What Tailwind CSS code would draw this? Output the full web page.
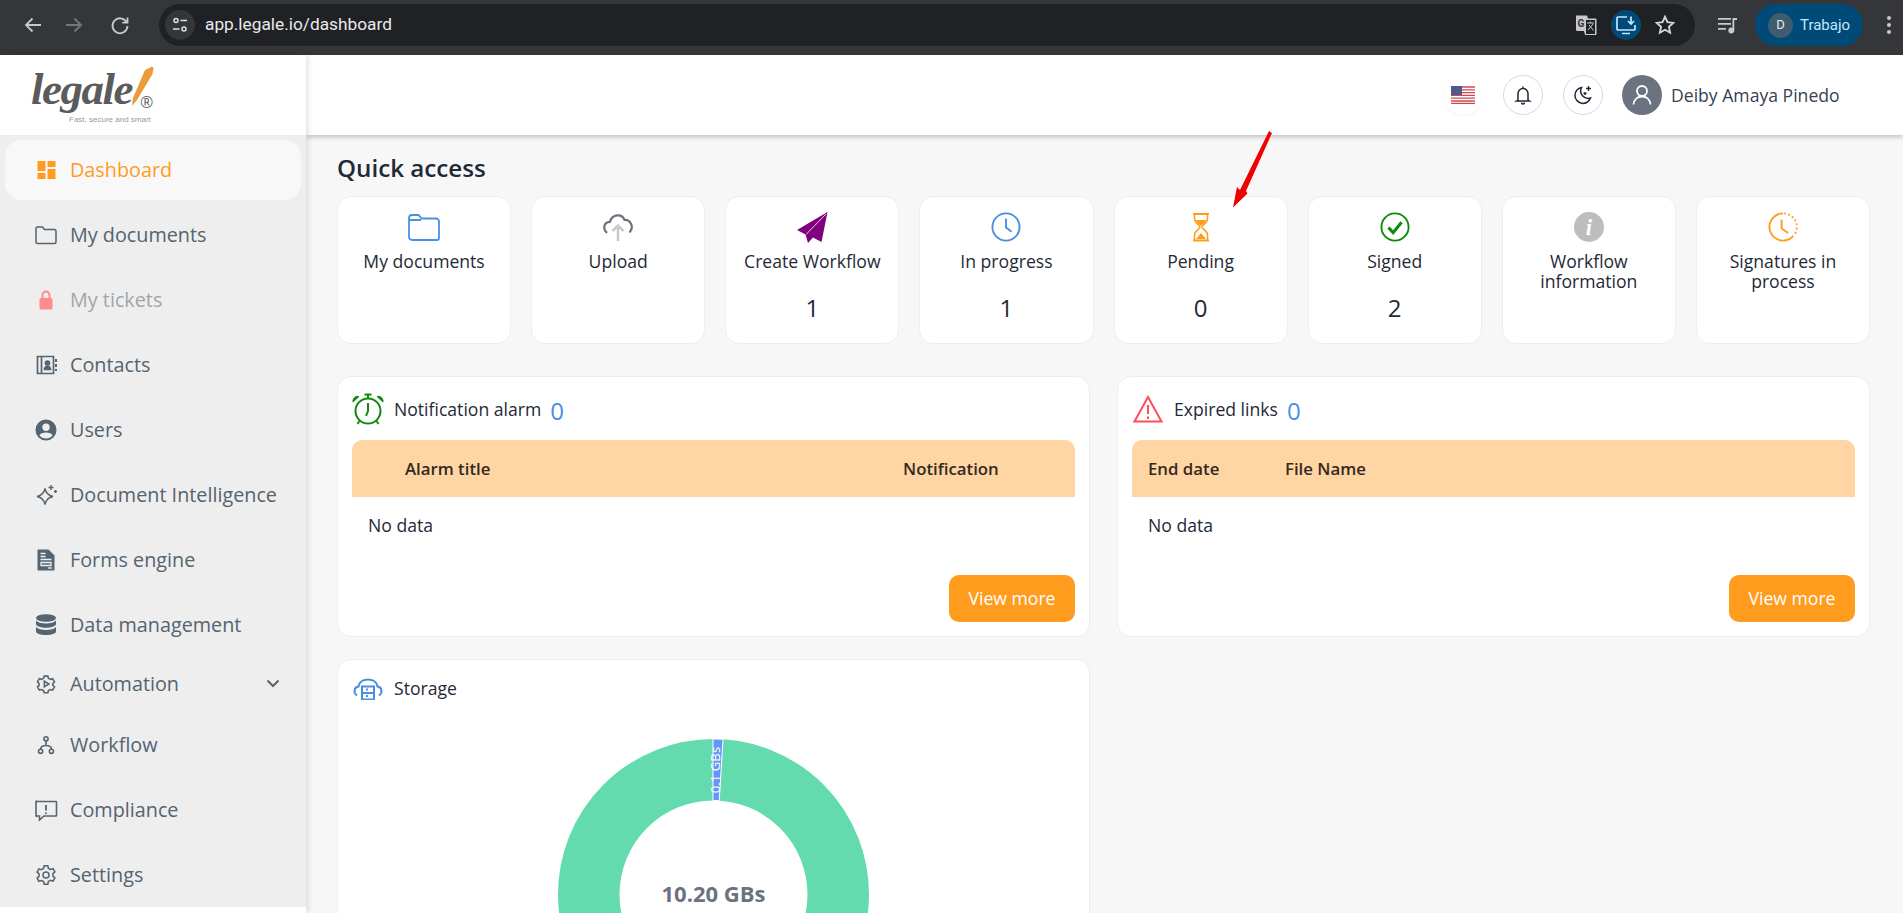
<!DOCTYPE html>
<html lang="en">
<head>
  <meta charset="UTF-8" />
  <title>Legale dashboard</title>
  <script src="https://cdn.jsdelivr.net/npm/@tailwindcss/browser@4"></script>
</head>
<body class="h-[913px] overflow-hidden bg-white font-['Open_Sans',sans-serif] text-[17.6px] text-[#1f2937]">
  <!-- browser chrome -->
  <div class="h-[55px] pb-[5px] bg-[#35363a] flex items-center relative font-['Roboto',sans-serif]">
    <div class="w-[159px] shrink-0 flex items-center pl-[21px] gap-[17px] text-[#c7c9cc]">
      <svg class="w-6 h-6" viewBox="0 0 24 24" fill="none" stroke="currentColor" stroke-width="1.8"><path d="M20 12H5M11.5 5.5 5 12l6.500 6.500"/></svg>
      <svg class="w-6 h-6 text-[#75777b]" viewBox="0 0 24 24" fill="none" stroke="currentColor" stroke-width="1.800"><path d="M4 12h15M12.500 5.500 19 12l-6.500 6.500"/></svg>
      <svg class="w-6 h-6 ml-[5px]" viewBox="0 0 24 24" fill="none" stroke="currentColor" stroke-width="1.800"><path d="M18.500 9A7.500 7.500 0 1 0 19.500 13"/><path d="M19.500 4.500v5.200h-5.200" /></svg>
    </div>
    <div class="w-[1536px] h-[42px] rounded-full bg-[#202124] flex items-center pl-[6px] pr-[19px]">
      <div class="w-[30px] h-[30px] rounded-full bg-[#35363a] flex items-center justify-center text-[#dfe1e5]">
        <svg class="w-[18px] h-[18px]" viewBox="0 0 18 18" fill="none" stroke="currentColor" stroke-width="1.500"><circle cx="5" cy="4.500" r="2"/><path d="M9.500 4.500H16M2 13h6.500"/><circle cx="13" cy="13" r="2"/></svg>
      </div>
      <span class="ml-[10px] text-[17.3px] text-[#e8eaed]">app.legale.io/dashboard</span>
      <div class="ml-auto flex items-center">
        <svg class="w-[22px] h-[22px]" viewBox="0 0 22 22"><path d="M1 1.500h11l1 3H20.500a1 1 0 0 1 1 1V20a1 1 0 0 1-1 1H10l-1-4H2a1 1 0 0 1-1-1z" fill="#c7c9cc"/><path d="M11 6h9v14h-9z" fill="#202124"/><path d="M12 9h7M15.500 7.500V9M13 16l5-6M14 11l4.500 5.500" stroke="#c7c9cc" fill="none"/><text x="2.500" y="13" font-size="10" font-weight="700" fill="#35363a">G</text></svg>
        <div class="ml-[14px] w-[30px] h-[30px] rounded-full bg-[#004a77] flex items-center justify-center text-[#c2e7ff]">
          <svg class="w-[22px] h-[22px]" viewBox="0 0 22 22" fill="none" stroke="currentColor" stroke-width="1.700"><path d="M12 3H3a1 1 0 0 0-1 1v11a1 1 0 0 0 1 1h16a1 1 0 0 0 1-1v-4M7 19.500h8M16 2.500v7M13 7l3 3 3-3"/></svg>
        </div>
        <svg class="ml-[13px] w-[22px] h-[22px] text-[#d5d7da]" viewBox="0 0 24 24" fill="none" stroke="currentColor" stroke-width="2"><path d="m12 3 2.700 6 6.300.700-4.700 4.300 1.300 6.500L12 17.200 6.400 20.500 7.700 14 3 9.700 9.300 9z"/></svg>
      </div>
    </div>
    <svg class="ml-[22px] w-[22px] h-[22px] text-[#c7c9cc]" viewBox="0 0 22 22" fill="currentColor"><path d="M1 4h13v1.800H1zM1 9h13v1.800H1zM1 14h8v1.800H1z"/><path d="M15.500 4H20v2h-2.700v10.500a3 3 0 1 1-1.800-2.700z"/></svg>
    <div class="ml-[16px] w-[108px] h-[42px] rounded-full bg-[#004a77] flex items-center pl-[13px]">
      <div class="w-[25px] h-[25px] rounded-full bg-[#3f5d6e] flex items-center justify-center text-[13px] text-[#e8eaed]">D</div>
      <span class="ml-[7px] text-[15px] text-[#c2e7ff]">Trabajo</span>
    </div>
    <div class="ml-[24px] flex flex-col gap-[3px]">
      <span class="w-[4px] h-[4px] rounded-full bg-[#c7c9cc]"></span>
      <span class="w-[4px] h-[4px] rounded-full bg-[#c7c9cc]"></span>
      <span class="w-[4px] h-[4px] rounded-full bg-[#c7c9cc]"></span>
    </div>
  </div>

  <div class="flex h-[858px]">
    <!-- sidebar -->
    <aside class="w-[306px] shrink-0 bg-white z-10 shadow-[2px_0_6px_rgba(0,0,0,0.12)]">
      <div class="h-[80px] relative">
        <span class="absolute left-[31px] top-[6px] font-['Liberation_Serif',serif] italic font-bold text-[45px] leading-[56px] text-[#5b5b5b] tracking-[-1.5px]">legale</span>
        <svg class="absolute left-[126px] top-[9px] w-[30px] h-[46px]" viewBox="0 0 30 46"><path d="M19 6 26 2.500l1.500 1.500-1 6L11 36l-5 6 1-8z" fill="#ec9a3c"/></svg>
        <span class="absolute left-[140px] top-[38px] text-[16px] leading-[18px] text-[#666]">®</span>
        <span class="absolute left-[69px] top-[59px] font-['Liberation_Sans',sans-serif] text-[8px] leading-[12px] text-[#999] whitespace-nowrap">Fast, secure and smart</span>
      </div>
      <nav class="bg-[#eeeeee] h-[772px] px-[5px] pt-[5px] text-[19.8px] text-[#546470]">
        <a class="h-[60px] flex items-center pl-[29px] gap-[12px] rounded-[16px] bg-[#f8f8f8] text-[#ff9c1e]">
          <svg class="w-6 h-6" viewBox="0 0 24 24" fill="currentColor"><path d="M3.500 13h8V3h-8zm0 8h8v-6h-8zm10 0h8V11h-8zm0-18v6h8V3z"/></svg>
          Dashboard
        </a>
        <a class="mt-[5px] h-[60px] flex items-center pl-[29px] gap-[12px]">
          <svg class="w-6 h-6" viewBox="0 0 24 24" fill="none" stroke="currentColor" stroke-width="1.500"><path d="M2 5.500a1.500 1.500 0 0 1 1.500-1.500h5l2 2.500h10a1.500 1.500 0 0 1 1.500 1.500v11a1.500 1.500 0 0 1-1.500 1.500h-17A1.500 1.500 0 0 1 2 19z"/></svg>
          My documents
        </a>
        <a class="mt-[5px] h-[60px] flex items-center pl-[29px] gap-[12px] text-[#a0a6aa]">
          <svg class="w-6 h-6" viewBox="0 0 24 24"><path d="M8.500 11V7a3.500 3.500 0 0 1 7 0v4" fill="none" stroke="#ff8c8c" stroke-width="2"/><rect x="5.500" y="10" width="13" height="11.500" rx="1.500" fill="#ff8c8c"/></svg>
          My tickets
        </a>
        <a class="mt-[5px] h-[60px] flex items-center pl-[29px] gap-[12px]">
          <svg class="w-6 h-6" viewBox="0 0 24 24" fill="none" stroke="currentColor" stroke-width="1.700"><path d="M3.500 3.500h16v17h-16zM7.500 3.500v17"/><circle cx="13.500" cy="10" r="2" fill="currentColor"/><path d="M10.500 16.500c0-4 6-4 6 0z" fill="currentColor"/><path d="M22 6v3M22 11v3M22 16v2" stroke-width="2"/></svg>
          Contacts
        </a>
        <a class="mt-[5px] h-[60px] flex items-center pl-[29px] gap-[12px]">
          <svg class="w-6 h-6" viewBox="0 0 24 24" fill="currentColor"><path d="M12 1.500a10.500 10.500 0 1 0 0 21 10.500 10.500 0 0 0 0-21zm0 4a3.700 3.700 0 1 1 0 7.400 3.700 3.700 0 0 1 0-7.400zm0 15a8.500 8.500 0 0 1-6.600-3.200c.8-1.800 3.600-2.800 6.600-2.800s5.800 1 6.600 2.800A8.500 8.500 0 0 1 12 20.500z"/></svg>
          Users
        </a>
        <a class="mt-[5px] h-[60px] flex items-center pl-[29px] gap-[12px]">
          <svg class="w-6 h-6" viewBox="0 0 24 24" fill="none" stroke="currentColor" stroke-width="1.400"><path d="M11 5.500C12 10.500 14 12.500 19 13.500 14 14.500 12 16.500 11 21.500 10 16.500 8 14.500 3 13.500 8 12.500 10 10.500 11 5.500Z"/><path d="M17 2v5M14.500 4.500h5M21.500 7v3M20 8.500h3"/></svg>
          Document Intelligence
        </a>
        <a class="mt-[5px] h-[60px] flex items-center pl-[29px] gap-[12px]">
          <svg class="w-6 h-6" viewBox="0 0 24 24"><path d="M3.500 1.500h11l6 6v15h-17z" fill="currentColor"/><path d="M6.500 5.500h5M6.500 8.500h5M6.500 11.500h11M7 14.500h10v3H7z" stroke="#eeeeee" stroke-width="1.300" fill="none"/><path d="M14 20h4" stroke="#eeeeee" stroke-width="1.300"/></svg>
          Forms engine
        </a>
        <a class="mt-[5px] h-[60px] flex items-center pl-[29px] gap-[12px]">
          <svg class="w-6 h-6" viewBox="0 0 24 24" fill="currentColor"><ellipse cx="12" cy="5" rx="10" ry="3.800"/><path d="M2 7.500v3.500c0 2 4.500 3.800 10 3.800s10-1.800 10-3.800V7.500c-1.500 2-5.500 3-10 3s-8.500-1-10-3z"/><path d="M2 14v4.500c0 2 4.500 3.500 10 3.500s10-1.500 10-3.500V14c-1.500 2-5.500 3-10 3s-8.500-1-10-3z"/></svg>
          Data management
        </a>
        <a class="-mt-[1px] h-[60px] flex items-center pl-[29px] gap-[12px]">
          <svg class="w-[20px] h-[20px] mx-[2px]" viewBox="0 0 24 24" fill="none" stroke="currentColor" stroke-width="1.900"><path d="M9.800 2.500h4.400l.7 2.600 2.500 1.300 2.600-.8 2.200 3.900-1.900 1.900v2.200l1.900 1.900-2.200 3.900-2.600-.8-2.500 1.300-.7 2.600H9.800l-.7-2.600-2.500-1.300-2.600.8-2.200-3.900 1.900-1.900v-2.200L1.800 9.500 4 5.600l2.600.8 2.500-1.300z"/><path d="M10 8.500v7l5.500-3.500z"/></svg>
          Automation
          <svg class="w-5 h-5 ml-auto mr-[18px]" viewBox="0 0 20 20" fill="none" stroke="currentColor" stroke-width="2"><path d="m4.500 6.500 5.500 5.500 5.500-5.500"/></svg>
        </a>
        <a class="mt-[1px] h-[60px] flex items-center pl-[29px] gap-[12px]">
          <svg class="w-[20px] h-[20px] mx-[2px]" viewBox="0 0 24 24" fill="none" stroke="currentColor" stroke-width="1.900"><circle cx="12" cy="4.500" r="2.500"/><circle cx="5.500" cy="19.500" r="2.500"/><circle cx="18.500" cy="19.500" r="2.500"/><path d="M12 7v5.500M5.500 17c0-3 2.500-4.500 6.500-4.500s6.500 1.500 6.500 4.500"/></svg>
          Workflow
        </a>
        <a class="mt-[5px] h-[60px] flex items-center pl-[29px] gap-[12px]">
          <svg class="w-6 h-6" viewBox="0 0 24 24" fill="none" stroke="currentColor" stroke-width="1.600"><path d="M3 3.500h19a.5.5 0 0 1 .5.500v13.500a.5.5 0 0 1-.5.500H10l-4.500 4V18H3a.5.5 0 0 1-1-.5V4a.5.5 0 0 1 1-.5z"/><path d="M12 7v5.500M12 14.500v1.500" stroke-width="1.800"/></svg>
          Compliance
        </a>
        <a class="mt-[5px] h-[60px] flex items-center pl-[29px] gap-[12px]">
          <svg class="w-[22px] h-[22px] mx-[1px]" viewBox="0 0 24 24" fill="none" stroke="currentColor" stroke-width="1.700"><path d="M10 2h4l.6 2.800 2.400 1.200 2.700-.9 2 3.500-2.100 1.900v2.800l2.100 1.900-2 3.500-2.700-.9-2.400 1.200L14 22h-4l-.6-2.800L7 18l-2.700.9-2-3.500 2.100-1.900v-2.800L2.300 8.800l2-3.500L7 6.200l2.400-1.400z"/><circle cx="12" cy="12" r="3.300"/></svg>
          Settings
        </a>
      </nav>
    </aside>

    <div class="flex-1 min-w-0 h-full overflow-hidden bg-[#f7f7f7]">
      <!-- top header -->
      <header class="h-[80px] bg-white shadow-[0_2px_5px_rgba(0,0,0,0.22)] flex items-center pl-[1138px]">
        <div class="w-[38px] h-[40px] rounded-full shadow-[0_1px_3px_rgba(0,0,0,0.06)] flex items-center justify-center">
          <svg class="w-[24px] h-[18px]" viewBox="0 0 24 18"><rect width="24" height="18" fill="#fff"/><path d="M0 1h24M0 3.800h24M0 6.600h24M0 9.400h24M0 12.200h24M0 15h24M0 17.500h24" stroke="#cf4a55" stroke-width="1.300"/><rect width="11" height="9" fill="#4c5a8c"/></svg>
        </div>
        <div class="ml-[21px] w-[40px] h-[40px] rounded-full border border-[#d5d8e0] flex items-center justify-center text-[#1f2937]">
          <svg class="w-[20px] h-[20px]" viewBox="0 0 20 20" fill="none" stroke="currentColor" stroke-width="1.500"><path d="M5 15V8.500a5 5 0 0 1 10 0V15l1.500 1h-13zM10 1.500v2M8.500 17.500a1.500 1.500 0 0 0 3 0"/></svg>
        </div>
        <div class="ml-[20px] w-[40px] h-[40px] rounded-full border border-[#d5d8e0] flex items-center justify-center text-[#1f2937]">
          <svg class="w-[22px] h-[22px]" viewBox="0 0 22 22" fill="none" stroke="currentColor" stroke-width="1.500"><path d="M9.500 3.500a8 8 0 1 0 9 10.500 7.500 7.500 0 0 1-9-10.500z"/><path d="M16.500 2v5M14 4.500h5M13 8v3M11.500 9.500h3" stroke-width="1.300"/></svg>
        </div>
        <div class="ml-[19px] w-[40px] h-[40px] rounded-full bg-[#6b7280] flex items-center justify-center text-white">
          <svg class="w-[24px] h-[24px]" viewBox="0 0 24 24" fill="none" stroke="currentColor" stroke-width="1.800"><circle cx="12" cy="8" r="5"/><path d="M3.500 21.500c.5-5 4-8 8.500-8s8 3 8.500 8"/></svg>
        </div>
        <span class="ml-[9px] text-[#374151] whitespace-nowrap">Deiby Amaya Pinedo</span>
      </header>

      <main class="pl-[31px] pr-[33px] pt-[16px]">
        <h1 class="text-[24.2px] leading-[34px] font-semibold text-[#1f2937] mb-[11px]">Quick access</h1>

        <div class="grid grid-cols-8 gap-[20px]">
          <div class="h-[148px] rounded-[14px] bg-white border border-[#eeeeee] flex flex-col items-center pt-[15px] text-center">
            <svg class="w-[32px] h-[30px]" viewBox="0 0 32 30" fill="none" stroke="#4a90e2" stroke-width="1.800"><path d="M1 6a3 3 0 0 1 3-3h6.500l3 3.500H28a3 3 0 0 1 3 3V26a2 2 0 0 1-2 2H4a3 3 0 0 1-3-3zM1 8h12"/></svg>
            <p class="mt-[9px] leading-[20px] h-[39px] px-2">My documents</p>
          </div>
          <div class="h-[148px] rounded-[14px] bg-white border border-[#eeeeee] flex flex-col items-center pt-[15px] text-center">
            <svg class="w-[32px] h-[30px]" viewBox="0 0 32 30" fill="none" stroke-width="2.200"><path d="M5 21C.5 17 1.500 10 8 9.800 10 2 20 1 22.500 8c6-.5 10 7 5 12.500" stroke="#6b7280"/><path d="M16 29V14M10.500 19l5.500-5.500 5.500 5.500" stroke="#c9c9c9" stroke-width="2.500"/></svg>
            <p class="mt-[9px] leading-[20px] h-[39px] px-2">Upload</p>
          </div>
          <div class="h-[148px] rounded-[14px] bg-white border border-[#eeeeee] flex flex-col items-center pt-[15px] text-center">
            <svg class="w-[32px] h-[32px] -mb-[2px]" viewBox="0 0 32 32"><path d="M31.500 0 1 18l8.500 4.500L12 31l5-5.500 8.500 4.500z" fill="#800080"/><path d="M30 2 10 22.500" stroke="#fff" stroke-width=".8"/></svg>
            <p class="mt-[9px] leading-[20px] h-[39px] whitespace-nowrap">Create Workflow</p>
            <p class="text-[24px] leading-[36px]">1</p>
          </div>
          <div class="h-[148px] rounded-[14px] bg-white border border-[#eeeeee] flex flex-col items-center pt-[15px] text-center">
            <svg class="w-[32px] h-[30px]" viewBox="0 0 32 32" fill="none" stroke="#4a90e2" stroke-width="2"><circle cx="16" cy="16" r="14.500"/><path d="M16 7v9.500l6 4.500"/></svg>
            <p class="mt-[9px] leading-[20px] h-[39px] px-2">In progress</p>
            <p class="text-[24px] leading-[36px]">1</p>
          </div>
          <div class="h-[148px] rounded-[14px] bg-white border border-[#eeeeee] flex flex-col items-center pt-[15px] text-center">
            <svg class="w-[32px] h-[30px]" viewBox="0 0 32 30"><path d="M8 2h16M8 28.500h16" stroke="#ff9c1e" stroke-width="2"/><path d="M9.500 2v5c0 4 5.500 6 5.500 8s-5.500 4-5.500 8v5M22.500 2v5c0 4-5.500 6-5.500 8s5.500 4 5.500 8v5" fill="none" stroke="#ff9c1e" stroke-width="1.500"/><path d="M11 8h10c-.5 3-3.500 4-5 6-1.500-2-4.500-3-5-6zM16 21l5 6H11z" fill="#ff9c1e"/></svg>
            <p class="mt-[9px] leading-[20px] h-[39px] px-2">Pending</p>
            <p class="text-[24px] leading-[36px]">0</p>
          </div>
          <div class="h-[148px] rounded-[14px] bg-white border border-[#eeeeee] flex flex-col items-center pt-[15px] text-center">
            <svg class="w-[32px] h-[30px]" viewBox="0 0 32 32" fill="none" stroke="#0c8a0c"><circle cx="16" cy="16" r="14.500" stroke-width="2"/><path d="m9 16.500 5 5.500 9-11" stroke-width="3.200"/></svg>
            <p class="mt-[9px] leading-[20px] h-[39px] px-2">Signed</p>
            <p class="text-[24px] leading-[36px]">2</p>
          </div>
          <div class="h-[148px] rounded-[14px] bg-white border border-[#eeeeee] flex flex-col items-center pt-[15px] text-center">
            <svg class="w-[32px] h-[30px]" viewBox="0 0 32 32"><circle cx="16" cy="16" r="16" fill="#bdbdbd"/><text x="16" y="25" text-anchor="middle" font-size="24" font-weight="700" font-style="italic" font-family="Liberation Serif" fill="#fff">i</text></svg>
            <p class="mt-[9px] leading-[20px] h-[39px] px-2">Workflow information</p>
          </div>
          <div class="h-[148px] rounded-[14px] bg-white border border-[#eeeeee] flex flex-col items-center pt-[15px] text-center">
            <svg class="w-[32px] h-[30px]" viewBox="0 0 32 32" fill="none" stroke="#ff9c1e" stroke-width="2"><path d="M16 1.500a14.500 14.500 0 1 0 11 24"/><path d="M17 1.500a14.500 14.500 0 0 1 11 23" stroke-dasharray="2 2.500"/><path d="M14.500 8v9.500l7 5"/></svg>
            <p class="mt-[9px] leading-[20px] h-[39px] px-2">Signatures in process</p>
          </div>
        </div>

        <div class="mt-[32px] grid grid-cols-2 gap-x-[27px] gap-y-[22px]">
          <section class="h-[261px] rounded-[14px] bg-white border border-[#eeeeee] px-[14px] pt-[17px]">
            <div class="h-[30px] flex items-center">
              <svg class="w-[32px] h-[32px] mr-[10px]" viewBox="0 0 32 32" fill="none" stroke="#118a0c" stroke-width="2"><circle cx="16" cy="18" r="12.500"/><path d="M16 10v8l-2 5M12.500 1.500h7M16 1.500v4" /><path d="M1 9c-.5-4 3-6.500 6-5.500zM31 9c.5-4-3-6.500-6-5.500z" fill="#118a0c" stroke-width="1"/><path d="m7.500 28-2 3M24.500 28l2 3"/></svg>
              <span>Notification alarm</span>
              <span class="ml-[9px] text-[24px] leading-[30px] text-[#4a90e2] relative top-[2px]">0</span>
            </div>
            <div class="mt-[16px] h-[57px] rounded-t-[10px] bg-[#fed5a3] flex items-center pl-[53px] text-[16.8px] font-semibold text-[#33291f]">
              <span class="w-[498px]">Alarm title</span>
              <span>Notification</span>
            </div>
            <p class="pl-[16px] mt-[17px] mb-[39px] leading-[22px]">No data</p>
            <div class="flex justify-end">
              <a class="w-[126px] h-[47px] rounded-[10px] bg-[#ff9c1e] text-white flex items-center justify-center">View more</a>
            </div>
          </section>
          <section class="h-[261px] rounded-[14px] bg-white border border-[#eeeeee] px-[14px] pt-[17px]">
            <div class="h-[30px] flex items-center">
              <svg class="w-[32px] h-[28px] mr-[10px]" viewBox="0 0 32 28" fill="none" stroke="#ff4d5a" stroke-width="2"><path d="M16 2 2.500 26.500h27zM16 10v9M16 21.500v2.500"/></svg>
              <span>Expired links</span>
              <span class="ml-[9px] text-[24px] leading-[30px] text-[#4a90e2] relative top-[2px]">0</span>
            </div>
            <div class="mt-[16px] h-[57px] rounded-t-[10px] bg-[#fed5a3] flex items-center pl-[16px] text-[16.8px] font-semibold text-[#33291f]">
              <span class="w-[137px]">End date</span>
              <span>File Name</span>
            </div>
            <p class="pl-[16px] mt-[17px] mb-[39px] leading-[22px]">No data</p>
            <div class="flex justify-end">
              <a class="w-[126px] h-[47px] rounded-[10px] bg-[#ff9c1e] text-white flex items-center justify-center">View more</a>
            </div>
          </section>
          <section class="h-[400px] rounded-[14px] bg-white border border-[#eeeeee] px-[14px] pt-[13px]">
            <div class="h-[30px] flex items-center">
              <svg class="w-[32px] h-[24px] mr-[10px]" viewBox="0 0 32 24" fill="none" stroke="#4a90e2" stroke-width="2"><path d="M5 19.500C1 17 2 11 6.500 10.500 8 1 24 1 25.500 10.500 30 11 31 17 27 19.500"/><path d="M10 10.500h12v13H10zM10 17h12M14 13.500h2M14 20h2" /></svg>
              <span>Storage</span>
            </div>
            <svg class="mx-auto mt-[36px] w-[311px] h-[311px]" viewBox="0 0 311 311">
              <circle cx="155.500" cy="155.500" r="124.750" fill="none" stroke="#64dbae" stroke-width="61.500"/>
              <path d="M155 0A155.500 155.500 0 0 1 165 .3L161.200 61.700A94 94 0 0 0 155 61.500Z" fill="#6495fa" stroke="#fff" stroke-width="1"/>
              <text transform="translate(162 31) rotate(-90)" text-anchor="middle" font-size="13.200" fill="#fff">0.1 GBs</text>
              <text x="155.500" y="163" text-anchor="middle" font-size="22" font-weight="700" fill="#6b7280">10.20 GBs</text>
            </svg>
          </section>
        </div>
      </main>
    </div>
  </div>

  <!-- red annotation arrow -->
  <svg class="absolute left-0 top-0 w-[1903px] h-[913px] pointer-events-none z-20" viewBox="0 0 1903 913"><polygon points="1269,131 1272,133 1246,191 1247.500,193.500 1233,207.500 1237,187 1240,190" fill="#f00000"/></svg>
</body>
</html>
